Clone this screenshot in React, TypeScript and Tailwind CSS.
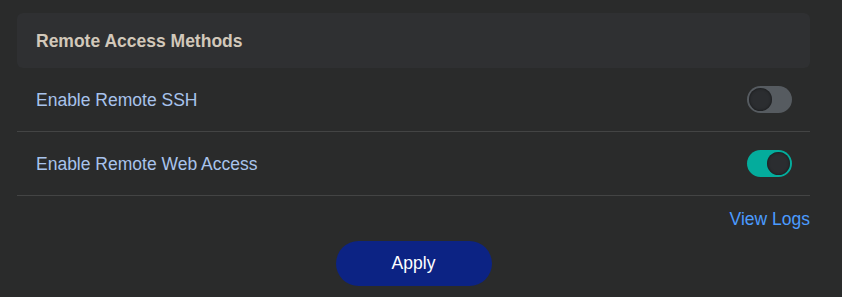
import { useState } from 'react'

function Toggle({ on, onChange }: { on: boolean; onChange: () => void }) {
  return (
    <button
      onClick={onChange}
      className={`relative flex h-[27px] w-[45px] items-center rounded-full px-[2px] ${
        on ? 'justify-end bg-[#04ac9c]' : 'justify-start bg-[#565b60]'
      }`}
    >
      <span className="h-[23px] w-[23px] rounded-full bg-[#2b2d30] shadow-[inset_0_0_3px_rgba(0,0,0,0.6)]" />
    </button>
  )
}

export default function App() {
  const [ssh, setSsh] = useState(false)
  const [web, setWeb] = useState(true)

  const rows = [
    { label: 'Enable Remote SSH', on: ssh, toggle: () => setSsh(!ssh) },
    { label: 'Enable Remote Web Access', on: web, toggle: () => setWeb(!web) },
  ]

  return (
    <div className="h-[297px] w-[842px] bg-[#2a2b2b] pl-[17px] pr-[32px] pt-[13px] font-['Liberation_Sans',Arial,sans-serif]">
      {/* Header */}
      <div className="flex h-[55px] items-center rounded-md bg-[#2f3032] px-[19px]">
        <h2 className="text-[17.5px] font-bold leading-[20px] text-[#d2c8ba]">Remote Access Methods</h2>
      </div>

      {/* Rows */}
      {rows.map((r) => (
        <div
          key={r.label}
          className="flex h-[64px] items-center justify-between border-b border-[#434444] pl-[19px] pr-[18px]"
        >
          <span className="text-[17.5px] leading-[20px] text-[#a8c3ec]">{r.label}</span>
          <Toggle on={r.on} onChange={r.toggle} />
        </div>
      ))}

      <div className="flex justify-end pt-[13px]">
        <a href="#" className="text-[17.5px] leading-[20px] text-[#4a9bff]">View Logs</a>
      </div>

      <div className="flex justify-center pt-[12px]">
        <button className="h-[45px] w-[156px] rounded-full bg-[#0c2384] text-[17.5px] text-white">
          Apply
        </button>
      </div>
    </div>
  )
}
